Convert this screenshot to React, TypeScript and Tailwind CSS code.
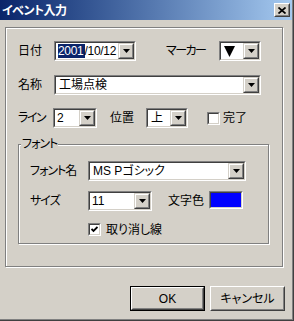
import type { ReactNode } from 'react';

const FONT = "font-['Liberation_Sans','Noto_Sans_CJK_JP',sans-serif] [font-feature-settings:'palt']";

const Arrow = () => (
  <svg width="7" height="4" viewBox="0 0 7 4">
    <polygon points="0,0 7,0 3.5,4" fill="#000" />
  </svg>
);

const DropBtn = () => (
  <div className="w-[16px] h-full border border-t-[#d4d0c8] border-l-[#d4d0c8] border-r-[#404040] border-b-[#404040]">
    <div className="w-full h-full flex items-center justify-center bg-[#d4d0c8] border border-t-white border-l-white border-r-[#808080] border-b-[#808080]">
      <Arrow />
    </div>
  </div>
);

const Sunken = ({ className, children }: { className: string; children?: ReactNode }) => (
  <div className={`flex border border-t-[#808080] border-l-[#808080] border-r-white border-b-white ${className}`}>
    <div className="flex flex-1 min-w-0 border border-t-[#404040] border-l-[#404040] border-r-[#d4d0c8] border-b-[#d4d0c8]">
      {children}
    </div>
  </div>
);

const Combo = ({ w, children }: { w: string; children?: ReactNode }) => (
  <Sunken className={`h-[20px] ${w}`}>
    <div className="flex flex-1 min-w-0 bg-white">
      <div className="flex flex-1 items-center pl-[2px] overflow-hidden whitespace-nowrap">{children}</div>
      <DropBtn />
    </div>
  </Sunken>
);

const Check = ({ checked }: { checked?: boolean }) => (
  <Sunken className="w-[13px] h-[13px]">
    <div className="flex flex-1 items-center justify-center bg-white">
      {checked && (
        <svg width="7" height="7" viewBox="0 0 7 7">
          <polyline points="0.5,3 2.5,5 6.5,1" fill="none" stroke="#000" strokeWidth="1.8" />
        </svg>
      )}
    </div>
  </Sunken>
);

const Button = ({ label, isDefault }: { label: string; isDefault?: boolean }) => (
  <div className={`w-[75px] h-[25px] ${isDefault ? 'border border-black' : ''}`}>
    <div className="w-full h-full border border-t-white border-l-white border-r-[#404040] border-b-[#404040]">
      <div className="w-full h-full flex items-center justify-center border border-t-[#d4d0c8] border-l-[#d4d0c8] border-r-[#808080] border-b-[#808080]">
        {label}
      </div>
    </div>
  </div>
);

export default function App() {
  return (
    <div className={`w-[294px] h-[321px] bg-[#d4d0c8] text-[12px] text-black leading-none flex flex-col shadow-[inset_-1px_-1px_0_#404040,inset_-2px_-2px_0_#808080] ${FONT}`}>
      {/* title bar */}
      <div className="h-[20px] mr-[2px] flex items-center justify-between bg-gradient-to-r from-[#0a246a] to-[#a6caf0]">
        <span className="pl-[2px] pt-[1px] text-white font-bold text-[12px] tracking-[-0.5px]">イベント入力</span>
        <div className="w-[16px] h-[14px] mr-[2px] border border-t-white border-l-white border-r-[#404040] border-b-[#404040]">
          <div className="w-full h-full flex items-center justify-center bg-[#d4d0c8] border border-t-[#d4d0c8] border-l-[#d4d0c8] border-r-[#808080] border-b-[#808080]">
            <svg width="8" height="7" viewBox="0 0 8 7">
              <path d="M0.5 0.5 L7.5 6.5 M7.5 0.5 L0.5 6.5" stroke="#000" strokeWidth="1.7" />
            </svg>
          </div>
        </div>
      </div>

      {/* main frame */}
      <div className="ml-[5px] mt-[7px] w-[278px] h-[240px] border border-[#808080] shadow-[inset_1px_1px_0_#fff,1px_1px_0_#fff] pl-[12px] pt-[13px] flex flex-col">
        <div className="flex items-center h-[20px]">
          <span className="w-[36px]">日付</span>
          <Combo w="w-[82px]">
            <span className="bg-[#0a246a] text-white leading-[13px] pt-[1px] pr-[1px] tracking-[-0.3px]">2001</span>
            <span className="tracking-[-0.3px]">/10/12</span>
          </Combo>
          <span className="ml-[30px] w-[53px] tracking-[-1.5px]">マーカー</span>
          <Combo w="w-[42px]">
            <svg width="11" height="11" viewBox="0 0 11 11" className="ml-[1px]">
              <polygon points="0,0 11,0 5.5,11" fill="#000" />
            </svg>
          </Combo>
        </div>

        <div className="flex items-center h-[20px] mt-[14px]">
          <span className="w-[36px]">名称</span>
          <Combo w="w-[207px]">
            <span className="pl-[1px]">工場点検</span>
          </Combo>
        </div>

        <div className="flex items-center h-[20px] mt-[13px]">
          <span className="w-[35px] tracking-[-1.5px]">ライン</span>
          <Combo w="w-[44px]">
            <span>2</span>
          </Combo>
          <span className="ml-[13px] w-[36px]">位置</span>
          <Combo w="w-[42px]">
            <span className="pl-[1px]">上</span>
          </Combo>
          <div className="ml-[19px]">
            <Check />
          </div>
          <span className="ml-[3px]">完了</span>
        </div>

        {/* font group */}
        <div className="relative mt-[16px] w-[251px] h-[100px] border border-[#808080] shadow-[inset_1px_1px_0_#fff,1px_1px_0_#fff] pl-[11px] pt-[16px] flex flex-col">
          <span className="absolute -top-[7px] left-[2px] bg-[#d4d0c8] px-[1px] tracking-[-1px]">フォント</span>
          <div className="flex items-center h-[20px]">
            <span className="w-[58px] tracking-[-1px]">フォント名</span>
            <Combo w="w-[158px]">
              <span className="pl-[1px]">MS Pゴシック</span>
            </Combo>
          </div>
          <div className="flex items-center h-[20px] mt-[10px]">
            <span className="w-[58px] tracking-[-1px]">サイズ</span>
            <Combo w="w-[64px]">
              <span>11</span>
            </Combo>
            <span className="ml-[16px] w-[41px]">文字色</span>
            <Sunken className="self-start w-[34px] h-[18px]">
              <div className="flex-1 bg-[#0000ff]" />
            </Sunken>
          </div>
          <div className="flex items-center h-[13px] mt-[12px]">
            <div className="ml-[58px]">
              <Check checked />
            </div>
            <span className="ml-[5px]">取り消し線</span>
          </div>
        </div>
      </div>

      {/* buttons */}
      <div className="flex mt-[19px] ml-[130px] gap-[5px]">
        <Button label="OK" isDefault />
        <Button label="キャンセル" />
      </div>
    </div>
  );
}
